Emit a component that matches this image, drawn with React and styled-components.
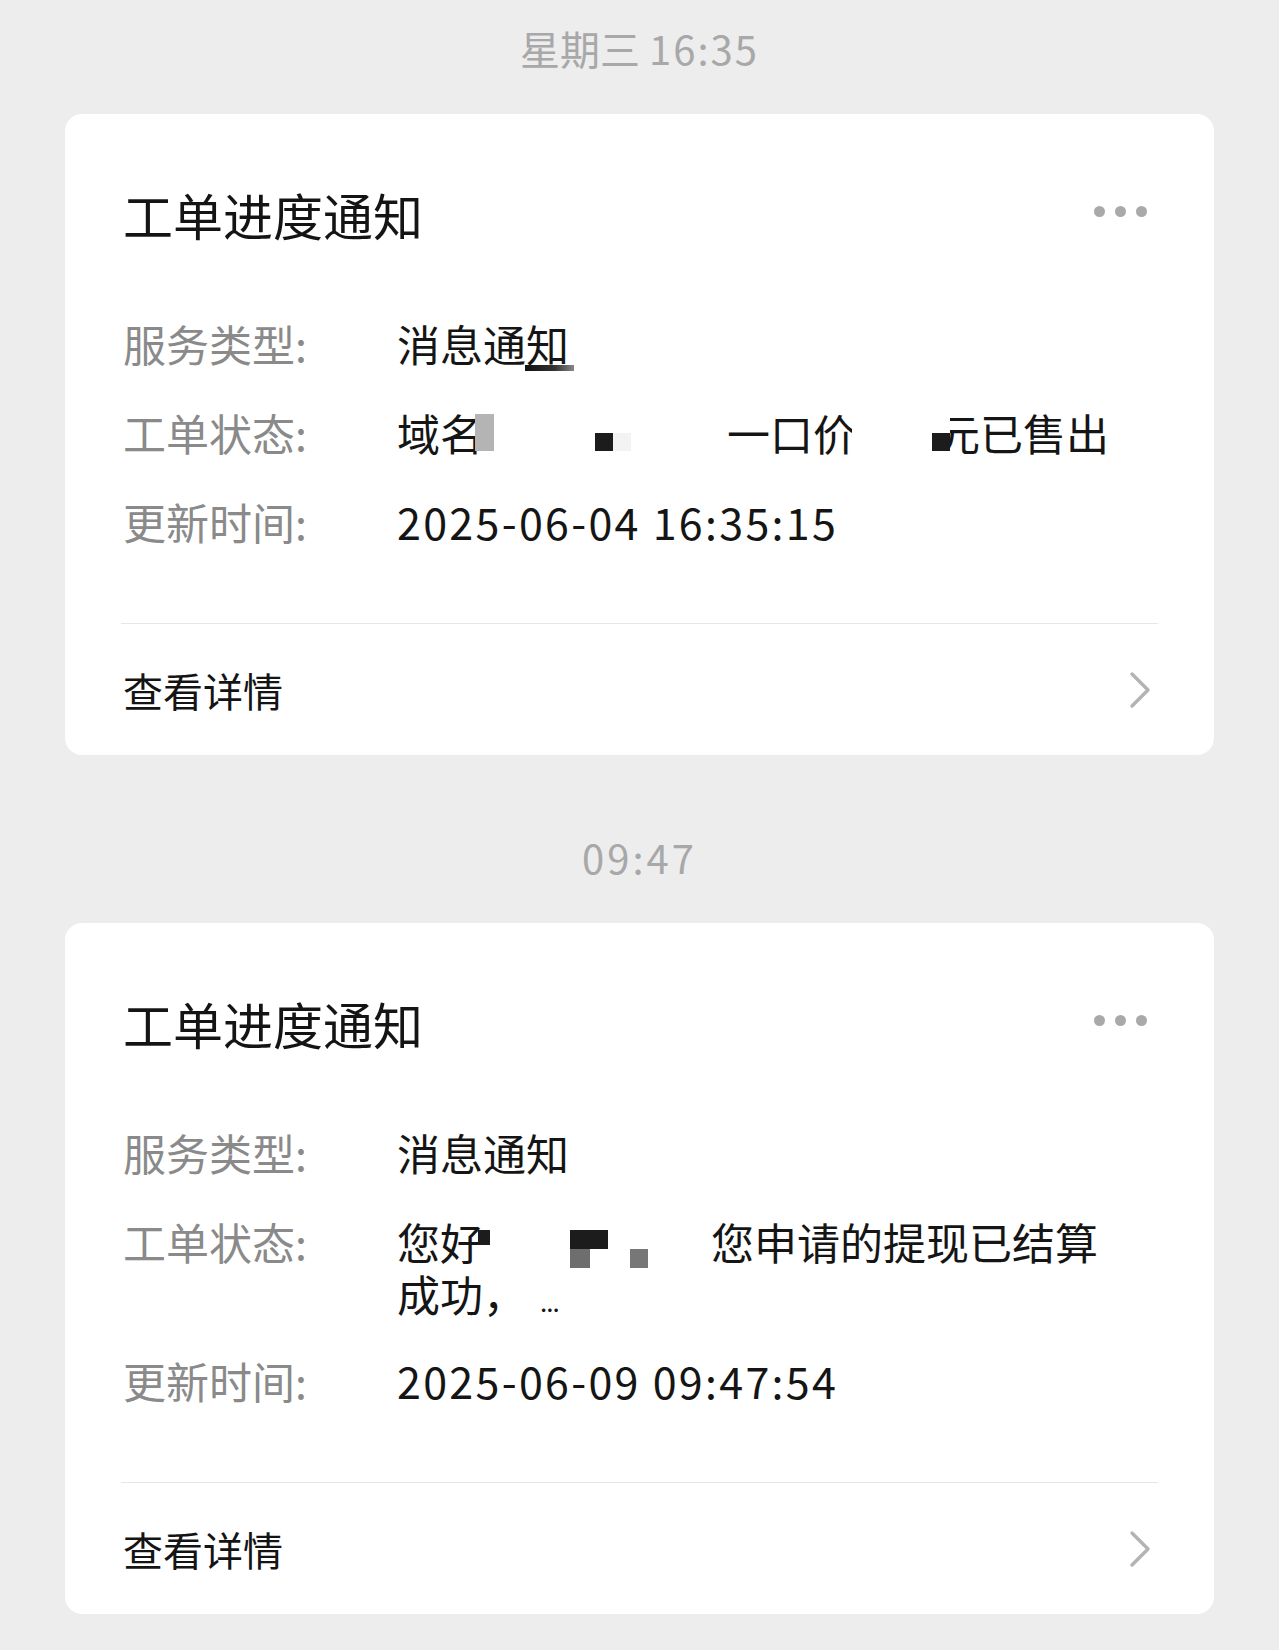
import React from 'react';
import styled, { createGlobalStyle } from 'styled-components';

const GlobalStyle = createGlobalStyle`
  body {
    margin: 0;
    background: #ededed;
    font-family: "Noto Sans CJK SC", "Noto Sans", sans-serif;
  }
`;

// page column
const Page = styled.div`
  background: #ededed;
  min-height: 1650px;
  padding-top: 23px;
  box-sizing: border-box;
`;

const Stamp = styled.div`
  height: 50px;
  line-height: 50px;
  text-align: center;
  font-size: 40px;
  color: #a8a8a8;
  margin-bottom: 41px;
`;

const Digits = styled.span`
  letter-spacing: ${p => p.ls || 2.3}px;
`;

const Card = styled.div`
  margin: 0 65px 77px;
  background: #fff;
  border-radius: 17px;
  padding: 74px 56px 0 58px;
`;

const TitleRow = styled.div`
  display: flex;
  align-items: center;
  justify-content: space-between;
  height: 60px;
  margin-top: -4px;
  margin-bottom: 72px;
`;

const Title = styled.div`
  font-size: 50px;
  color: #141414;
`;

const Dots = styled.div`
  display: flex;
  gap: 10px;
  margin-right: 11px;
  margin-top: -6px;
`;

const Dot = styled.span`
  width: 11px;
  height: 11px;
  border-radius: 50%;
  background: #a9a9a9;
`;

const Info = styled.div`
  display: grid;
  grid-template-columns: 274px 1fr;
  row-gap: 35px;
  font-size: 43px;
  line-height: 54px;
`;

const Label = styled.div`
  color: #8a8a8a;
`;

const Value = styled.div`
  color: #151515;
`;

const Line = styled.div`
  display: flex;
  align-items: center;
  height: ${p => (p.tight ? 50 : 54)}px;
  white-space: nowrap;
`;

const Mask = styled.span`
  flex: none;
  display: inline-block;
  width: ${p => p.w}px;
  height: ${p => p.h}px;
  background: ${p => p.c || '#1c1c1c'};
  align-self: flex-start;
  margin-top: ${p => p.top || 0}px;
  margin-left: ${p => p.ml || 0}px;
`;

const Gap = styled.span`
  flex: none;
  width: ${p => p.w}px;
`;

const Clip = styled.span`
  flex: none;
  display: inline-block;
  width: ${p => p.w}px;
  overflow: hidden;
  direction: ${p => (p.right ? 'rtl' : 'ltr')};
`;

const Stack = styled.span`
  flex: none;
  display: flex;
  flex-direction: column;
  align-self: flex-start;
  margin-top: ${p => p.top}px;
`;

const Ellipsis = styled.span`
  font-size: 26px;
  margin-left: 14px;
  align-self: flex-end;
  line-height: 34px;
  letter-spacing: -1px;
`;

const Divider = styled.div`
  margin: 75px 0 0 -2px;
  border-top: 1px solid #e6e6e6;
`;

const Footer = styled.div`
  height: 131px;
  display: flex;
  align-items: center;
  justify-content: space-between;
`;

const LinkText = styled.div`
  font-size: 40px;
  color: #141414;
`;

const Chevron = () => (
  <svg width="24" height="38" viewBox="0 0 24 38" style={{ marginRight: 6 }}>
    <polyline points="4,3 20,19 4,35" fill="none" stroke="#b3b3b3" strokeWidth="3.4" strokeLinecap="round" strokeLinejoin="round" />
  </svg>
);

const NoticeCard = ({ children }) => (
  <Card>
    <TitleRow>
      <Title>工单进度通知</Title>
      <Dots>
        <Dot />
        <Dot />
        <Dot />
      </Dots>
    </TitleRow>
    <Info>{children}</Info>
    <Divider />
    <Footer>
      <LinkText>查看详情</LinkText>
      <Chevron />
    </Footer>
  </Card>
);

const App = () => (
  <>
    <GlobalStyle />
    <Page>
      <Stamp>星期三 <Digits ls={2}>16:35</Digits></Stamp>
      <NoticeCard>
        <Label>服务类型:</Label>
        <Value>
          <Line>
            消息通知
            <Mask w={49} h={6} top={49} ml={-44} c="linear-gradient(90deg,#111 0%,#333 60%,#888 100%)" />
          </Line>
        </Value>
        <Label>工单状态:</Label>
        <Value>
          <Line>
            域名
            <Mask w={19} h={37} top={9} ml={-8} c="#b4b4b4" />
            <Gap w={101} />
            <Mask w={18} h={18} top={28} />
            <Mask w={18} h={18} top={28} c="#f3f3f3" />
            <Gap w={96} />
            一口
            <Clip w={39}>价</Clip>
            <Gap w={80} />
            <Mask w={18} h={18} top={28} />
            <Clip w={30} right>元</Clip>
            已售出
          </Line>
        </Value>
        <Label>更新时间:</Label>
        <Value><Digits>2025-06-04 16:35:15</Digits></Value>
      </NoticeCard>

      <Stamp><Digits ls={3}>09:47</Digits></Stamp>
      <NoticeCard>
        <Label>服务类型:</Label>
        <Value>消息通知</Value>
        <Label>工单状态:</Label>
        <Value>
          <Line>
            您好
            <Mask w={12} h={15} top={16} ml={-5} />
            <Gap w={80} />
            <Stack top={16}>
              <Mask w={38} h={19} />
              <Mask w={20} h={19} c="#6e6e6e" />
            </Stack>
            <Gap w={22} />
            <Stack top={35}>
              <Mask w={18} h={19} c="#777" />
            </Stack>
            <Gap w={63} />
            您申请的提现已结算
          </Line>
          <Line tight>
            成功，
            <Ellipsis>...</Ellipsis>
          </Line>
        </Value>
        <Label>更新时间:</Label>
        <Value><Digits>2025-06-09 09:47:54</Digits></Value>
      </NoticeCard>
    </Page>
  </>
);

export default App;
